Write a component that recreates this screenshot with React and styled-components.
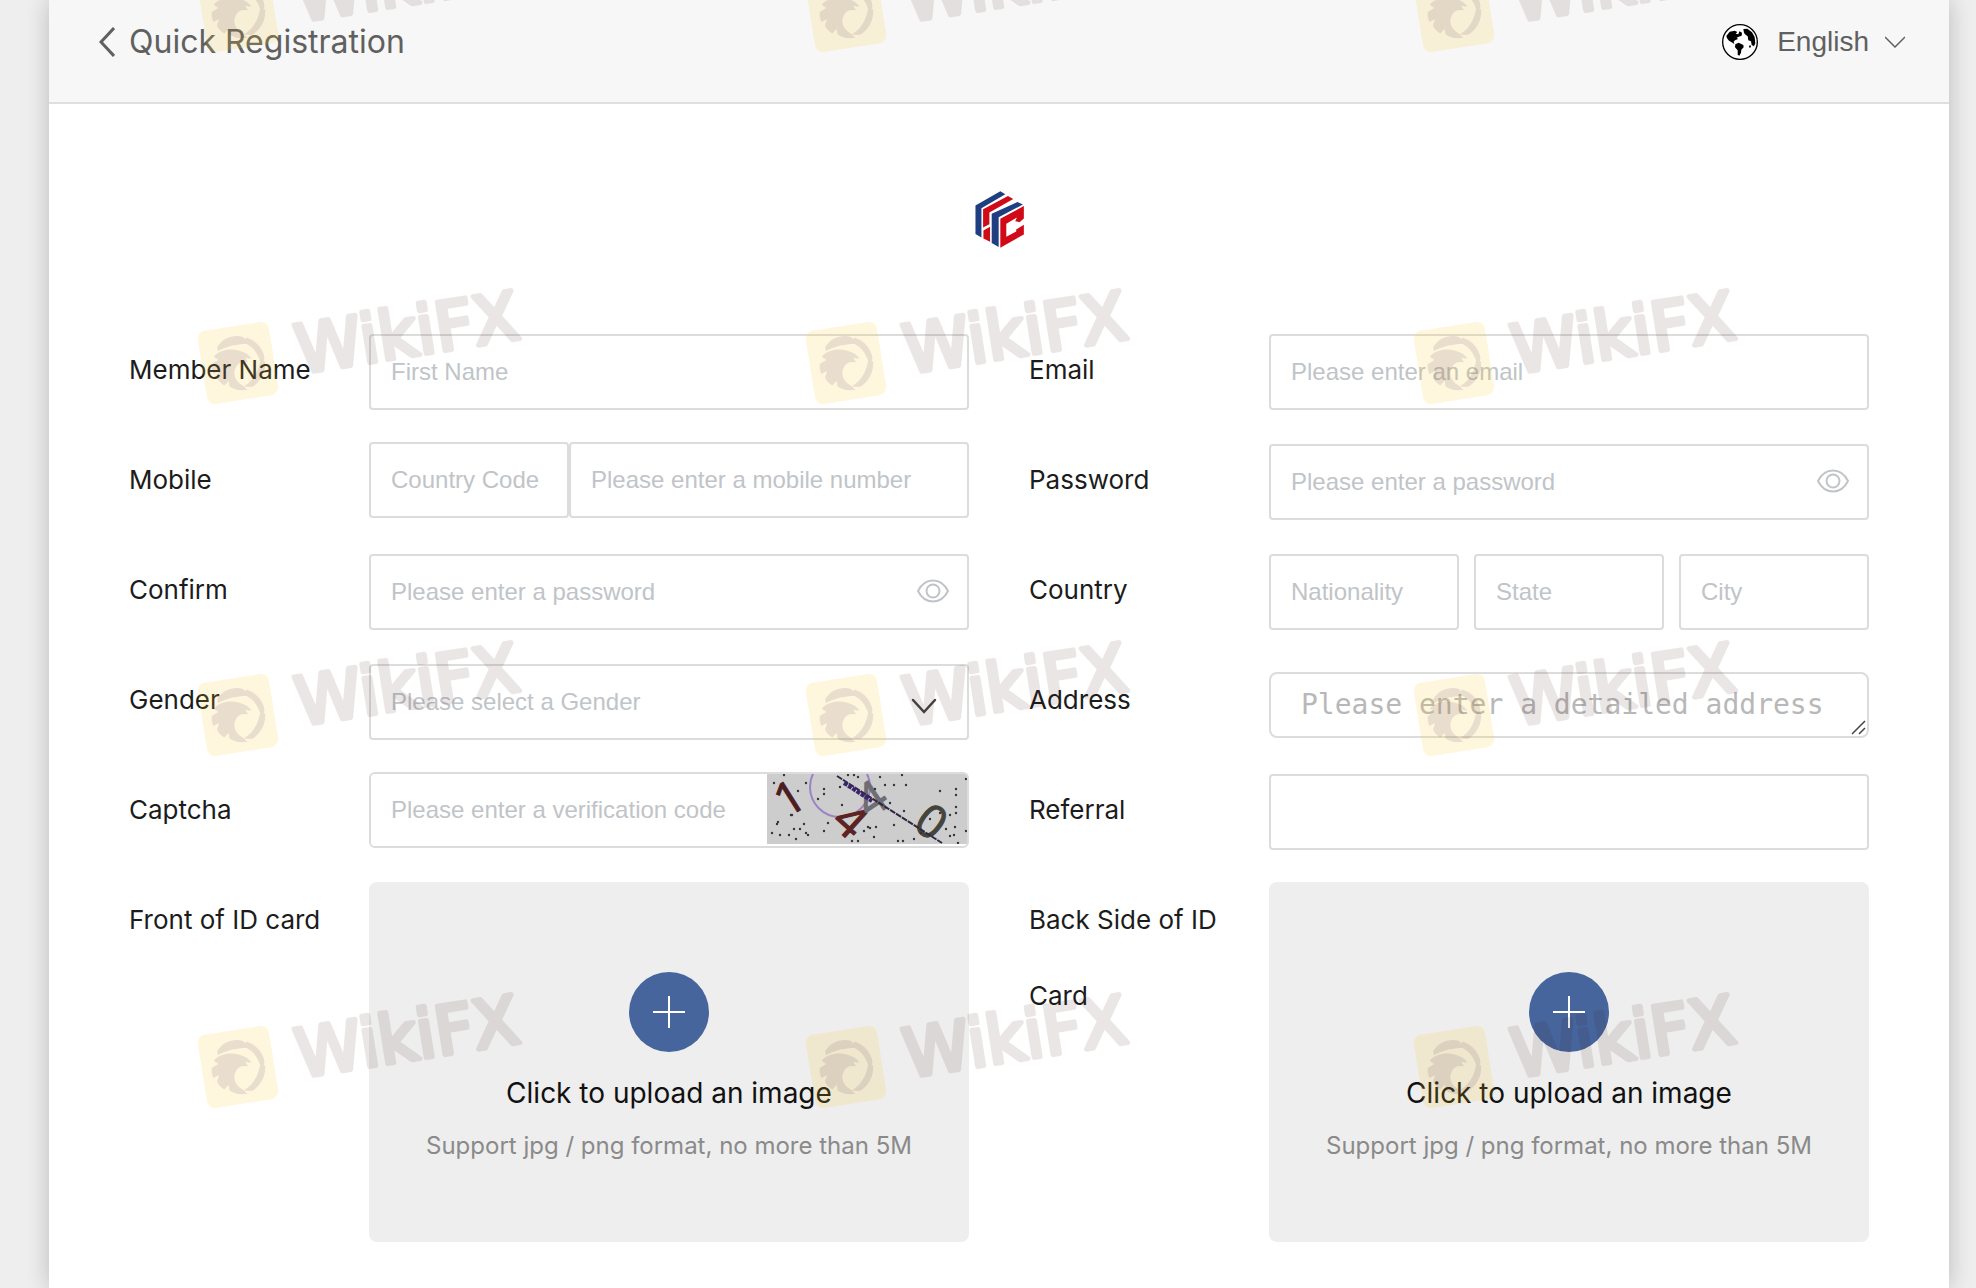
import React, { useState } from "react";
import styled, { createGlobalStyle } from "styled-components";

const GlobalStyle = createGlobalStyle`
  * {
    box-sizing: border-box;
  }
  body {
    margin: 0;
    background: #eeeeee;
    font-family: Inter, "Liberation Sans", sans-serif;
  }
`;

const Page = styled.div`
  position: relative;
  min-height: 100vh;
  padding: 0 27px 0 49px;
  overflow: hidden;
`;

const Panel = styled.main`
  min-height: 100vh;
  background: white;
  box-shadow: 0 0 22px rgba(0, 0, 0, 0.22);
`;

const Header = styled.header`
  display: flex;
  justify-content: space-between;
  align-items: center;
  height: 104px;
  padding: 0 44px 18px 50px;
  background: #f7f7f7;
  border-bottom: 2px solid #dfdfdf;
`;

const BackLink = styled.a`
  display: flex;
  align-items: center;
  gap: 14px;
  color: #606060;
  text-decoration: none;
`;

const Title = styled.h1`
  margin: 0;
  font-size: 32px;
  line-height: 40px;
  font-weight: 400;
`;

const Language = styled.button`
  display: flex;
  align-items: center;
  padding: 0;
  border: none;
  background: none;
  color: #606060;
  font-family: "Liberation Sans", Arial, sans-serif;
  font-size: 28px;
  line-height: 40px;
  cursor: pointer;
  span {
    margin: 0 16px 0 19px;
  }
`;

const LogoWrapper = styled.div`
  display: flex;
  justify-content: center;
  padding: 87px 0 84px;
`;

const Form = styled.form`
  display: grid;
  grid-template-columns: 1fr 1fr;
  grid-auto-rows: minmax(110px, auto);
  column-gap: 60px;
  padding: 0 80px 46px;
`;

const Row = styled.div`
  display: flex;
  align-items: flex-start;
`;

const Label = styled.label`
  flex: 0 0 240px;
  padding-right: 30px;
  color: #1c1c1c;
  font-size: 26px;
  line-height: 76px;
`;

const Control = styled.div`
  position: relative;
  display: flex;
  flex: 1;
  min-width: 0;
  gap: ${(props) => props.$gap || 0}px;
  padding-top: ${(props) => (props.$flush ? 0 : 2)}px;
`;

const Input = styled.input`
  flex: ${(props) => (props.$width ? `0 0 ${props.$width}px` : "1 1 0")};
  min-width: 0;
  width: 100%;
  height: 76px;
  padding: 0 20px;
  border: 2px solid #dcdcdc;
  border-radius: 4px;
  background: white;
  color: #333333;
  font-family: "Liberation Sans", Arial, sans-serif;
  font-size: 24px;
  outline: none;
  &::placeholder {
    color: #c0c4c8;
    opacity: 1;
  }
`;

const Select = styled(Input).attrs({ as: "select" })`
  appearance: none;
  padding-bottom: 2px;
  color: #c0c4c8;
`;

const SelectArrow = styled.svg`
  position: absolute;
  right: 32px;
  top: 36px;
  pointer-events: none;
`;

const EyeButton = styled.button`
  position: absolute;
  right: 20px;
  top: 27px;
  display: flex;
  padding: 0;
  border: none;
  background: none;
  color: #c0c4c8;
  cursor: pointer;
`;

const Address = styled.textarea`
  flex: 1;
  min-width: 0;
  height: 66px;
  margin-top: 8px;
  padding: 13px 30px 0;
  border: 2px solid #dcdcdc;
  border-radius: 8px;
  background: white;
  color: #333333;
  font-family: "DejaVu Sans Mono", monospace;
  font-size: 28px;
  line-height: 36px;
  outline: none;
  overflow: hidden;
  resize: none;
  &::placeholder {
    color: #b8b8b8;
    opacity: 1;
  }
`;

const Grip = styled.svg`
  position: absolute;
  right: 3px;
  top: 58px;
  pointer-events: none;
`;

const CaptchaBox = styled.div`
  display: flex;
  flex: 1;
  height: 76px;
  border: 2px solid #dcdcdc;
  border-radius: 6px;
  overflow: hidden;
  ${Input} {
    height: 72px;
    border: none;
  }
`;

const CaptchaButton = styled.button`
  flex: 0 0 200px;
  height: 70px;
  padding: 0;
  border: none;
  background: #cdcdcd;
  cursor: pointer;
  svg {
    display: block;
  }
`;

const Upload = styled.label`
  display: flex;
  flex: 1;
  flex-direction: column;
  align-items: center;
  height: 360px;
  padding-top: 90px;
  border-radius: 8px;
  background: #eeeeee;
  cursor: pointer;
`;

const FileInput = styled.input`
  position: absolute;
  width: 1px;
  height: 1px;
  opacity: 0;
`;

const PlusCircle = styled.span`
  display: flex;
  justify-content: center;
  align-items: center;
  width: 80px;
  height: 80px;
  border-radius: 50%;
  background: #46659d;
`;

const UploadTitle = styled.span`
  margin-top: 21px;
  color: #111111;
  font-size: 28px;
  line-height: 40px;
`;

const UploadHint = styled.span`
  margin-top: 16px;
  color: #8a8a8a;
  font-size: 24px;
  line-height: 34px;
`;

const Watermarks = styled.div`
  position: absolute;
  top: -104px;
  left: 188px;
  display: grid;
  grid-template-columns: repeat(3, 608px);
  grid-auto-rows: 352px;
  pointer-events: none;
`;

const Globe = () => (
  <svg width="36" height="36" viewBox="486 72 108 108" aria-hidden="true">
    <circle cx="540" cy="126" r="52" fill="white" stroke="black" strokeWidth="4" />
    <path d="M499 108 L509 95 L524 92 L532 96 L527 101 L535 103 L538 94 L546 98 L545 107 L536 110 L530 113 L534 117 L525 121 L521 125 L523 132 L515 127 L507 122 L501 115Z" />
    <path d="M550 87 L562 86 L576 97 L584 111 L586 130 L582 139 L575 135 L573 124 L565 121 L563 109 L555 103 L552 98Z" />
    <path d="M526 133 L536 128 L550 135 L551 142 L544 149 L543 158 L538 167 L533 164 L533 151 L525 142Z" />
    <path d="M567 137 l5 -1 l1 6 l-5 1Z" />
  </svg>
);

const Logo = () => (
  <svg width="50" height="57" viewBox="103 62 150 172" role="img" aria-label="HC">
    <path fill="#1d3f82" d="M107 106 L182 63 L197 72 L125 114 L125 202 L107 192Z" />
    <path fill="#d10a17" d="M130 117 L205 77 L221 86 L149 127 L149 162 L130 172Z" />
    <path fill="#d10a17" d="M131 181 L151 170 L151 215 L131 205Z" />
    <path fill="#1d3f82" d="M156 131 L234 95 L250 103 L177 141 L177 231 L156 219Z" />
    <path
      fill="#d10a17"
      d="M182 146 L253 107 L253 145 L240 156 L227 153 L232 142 L200 161 L200 200 L230 184 L230 178 L253 164 L253 193 L182 233Z"
    />
  </svg>
);

const Eye = () => (
  <svg width="32" height="24" viewBox="0 0 32 24" fill="none" stroke="currentColor" strokeWidth="2">
    <path d="M1 12 C8 -2 24 -2 31 12 C24 26 8 26 1 12Z" strokeLinejoin="round" />
    <circle cx="16" cy="12" r="6.5" />
  </svg>
);

const captchaDots = [
  [7, 9], [17, 1], [31, 17], [39, 9], [51, 25], [57, 15], [57, 20], [75, 31],
  [24, 41], [25, 41], [10, 50], [11, 48], [5, 59], [13, 61], [22, 61], [27, 55],
  [33, 55], [37, 50], [39, 59], [41, 61], [29, 65], [57, 57], [61, 49], [81, 1],
  [87, 1], [91, 3], [73, 13], [113, 3], [108, 15], [118, 11], [127, 11], [139, 11],
  [135, 1], [123, 29], [137, 37], [127, 51], [131, 67], [136, 67], [147, 65], [107, 63],
  [109, 53], [103, 54], [97, 57], [85, 67], [91, 67], [173, 17], [189, 15], [189, 21],
  [199, 5], [189, 33], [189, 39], [183, 41], [188, 53], [187, 61], [191, 69], [199, 57],
  [163, 45], [173, 39], [179, 55], [183, 62], [154, 59], [101, 53],
];

const captchaChars = [
  { char: "1", x: 22, y: 23, angle: -32, color: "#4b1c22" },
  { char: "4", x: 84, y: 46, angle: 42, color: "#5c2224" },
  { char: "4", x: 104, y: 24, angle: -34, color: "#6d6d72" },
  { char: "0", x: 165, y: 47, angle: 36, color: "#45443c" },
];

const CaptchaImage = () => (
  <svg width="200" height="70" viewBox="0 0 200 70" aria-hidden="true">
    <circle cx="73" cy="13" r="30" fill="none" stroke="#9b83c6" strokeWidth="2" />
    {captchaChars.map(({ char, x, y, angle, color }) => (
      <text
        key={x}
        transform={`translate(${x} ${y}) rotate(${angle})`}
        y="17"
        textAnchor="middle"
        fontFamily="Open Sans, sans-serif"
        fontSize="46"
        fill={color}
        stroke={color}
        strokeWidth="1"
      >
        {char}
      </text>
    ))}
    <path d="M70 2 L175 69" stroke="#2f2940" strokeWidth="2" strokeDasharray="6 1" />
    <path d="M77 9 L105 27" stroke="#3b2370" strokeWidth="4" strokeDasharray="4 1" />
    {captchaDots.map(([x, y]) => (
      <circle key={`${x}-${y}`} cx={x} cy={y} r="1.2" fill="#33353b" />
    ))}
  </svg>
);

const Watermark = () => (
  <svg width="360" height="180" viewBox="0 0 360 180" aria-hidden="true">
    <g transform="translate(50 115) rotate(-9)">
      <rect x="-36" y="-37" width="72" height="74" rx="8" fill="#f8c62c" opacity="0.16" />
      <g fill="#4a2a50" opacity="0.11">
        <path d="M-18 -19 C-11 -27 0 -29 9 -25 L14 -17 C5 -19 -6 -19 -18 -15Z" />
        <path d="M12 -24 C22 -19 27 -10 27 -1 L23 7 C22 -4 19 -13 9 -19Z" />
        <path d="M27 3 C26 14 19 22 10 26 L2 24 C12 20 19 12 23 -1Z" />
        <path d="M-23 -10 C-16 -16 -5 -16 3 -12 C8 -10 12 -7 14 -2 L8 -4 L10 1 C4 -1 0 0 -3 4 C-7 10 -6 17 1 23 L5 28 C-2 28 -8 26 -12 22 L-12 16 L-17 20 C-20 17 -22 15 -23 11 L-20 5 L-26 7 C-27 3 -27 0 -26 -3 L-19 -6Z" />
      </g>
      <text
        x="59"
        y="20"
        fontFamily="DejaVu Sans, sans-serif"
        fontSize="67"
        fill="#421616"
        stroke="#421616"
        strokeWidth="5"
        strokeLinejoin="round"
        opacity="0.1"
      >
        WikiFX
      </text>
    </g>
  </svg>
);

const PasswordControl = ({ id }) => {
  const [visible, setVisible] = useState(false);
  return (
    <Control>
      <Input id={id} type={visible ? "text" : "password"} placeholder="Please enter a password" />
      <EyeButton type="button" aria-label="Toggle password" onClick={() => setVisible(!visible)}>
        <Eye />
      </EyeButton>
    </Control>
  );
};

const UploadControl = ({ id }) => (
  <Control $flush>
    <Upload>
      <FileInput id={id} type="file" accept="image/png, image/jpeg" />
      <PlusCircle>
        <svg width="32" height="32" viewBox="0 0 32 32" stroke="white" strokeWidth="2">
          <path d="M16 0V32M0 16H32" />
        </svg>
      </PlusCircle>
      <UploadTitle>Click to upload an image</UploadTitle>
      <UploadHint>Support jpg / png format, no more than 5M</UploadHint>
    </Upload>
  </Control>
);

const App = () => {
  return (
    <Page>
      <GlobalStyle />
      <Panel>
        <Header>
          <BackLink href="#">
            <svg width="16" height="30" viewBox="0 0 16 30" fill="none" stroke="currentColor" strokeWidth="3">
              <path d="M15 1 L2 15 L15 29" />
            </svg>
            <Title>Quick Registration</Title>
          </BackLink>
          <Language type="button">
            <Globe />
            <span>English</span>
            <svg width="20" height="12" viewBox="0 0 20 12" fill="none" stroke="currentColor" strokeWidth="1.5">
              <path d="M0 1 L10 11 L20 1" />
            </svg>
          </Language>
        </Header>
        <LogoWrapper>
          <Logo />
        </LogoWrapper>
        <Form>
          <Row>
            <Label htmlFor="name">Member Name</Label>
            <Control>
              <Input id="name" placeholder="First Name" />
            </Control>
          </Row>
          <Row>
            <Label htmlFor="email">Email</Label>
            <Control>
              <Input id="email" type="email" placeholder="Please enter an email" />
            </Control>
          </Row>
          <Row>
            <Label htmlFor="mobile">Mobile</Label>
            <Control $flush>
              <Input $width={200} aria-label="Country Code" placeholder="Country Code" />
              <Input id="mobile" type="tel" placeholder="Please enter a mobile number" />
            </Control>
          </Row>
          <Row>
            <Label htmlFor="password">Password</Label>
            <PasswordControl id="password" />
          </Row>
          <Row>
            <Label htmlFor="confirm">Confirm</Label>
            <PasswordControl id="confirm" />
          </Row>
          <Row>
            <Label htmlFor="country">Country</Label>
            <Control $gap={15}>
              <Input id="country" placeholder="Nationality" />
              <Input aria-label="State" placeholder="State" />
              <Input aria-label="City" placeholder="City" />
            </Control>
          </Row>
          <Row>
            <Label htmlFor="gender">Gender</Label>
            <Control>
              <Select id="gender" defaultValue="">
                <option value="">Please select a Gender</option>
              </Select>
              <SelectArrow width="26" height="16" viewBox="0 0 26 16" fill="none" stroke="#444444" strokeWidth="2.5">
                <path d="M2 2 L13 14 L24 2" strokeLinecap="round" />
              </SelectArrow>
            </Control>
          </Row>
          <Row>
            <Label htmlFor="address">Address</Label>
            <Control>
              <Address id="address" rows={1} placeholder="Please enter a detailed address" />
              <Grip width="15" height="15" viewBox="0 0 15 15" stroke="#444444" strokeWidth="1.5">
                <path d="M1 14 L14 1 M8 14 L14 8" />
              </Grip>
            </Control>
          </Row>
          <Row>
            <Label htmlFor="captcha">Captcha</Label>
            <Control $flush>
              <CaptchaBox>
                <Input id="captcha" placeholder="Please enter a verification code" />
                <CaptchaButton type="button" aria-label="Refresh captcha">
                  <CaptchaImage />
                </CaptchaButton>
              </CaptchaBox>
            </Control>
          </Row>
          <Row>
            <Label htmlFor="referral">Referral</Label>
            <Control>
              <Input id="referral" />
            </Control>
          </Row>
          <Row>
            <Label htmlFor="front">Front of ID card</Label>
            <UploadControl id="front" />
          </Row>
          <Row>
            <Label htmlFor="back">Back Side of ID Card</Label>
            <UploadControl id="back" />
          </Row>
        </Form>
      </Panel>
      <Watermarks>
        {Array.from({ length: 12 }, (_, i) => (
          <Watermark key={i} />
        ))}
      </Watermarks>
    </Page>
  );
};

export default App;
